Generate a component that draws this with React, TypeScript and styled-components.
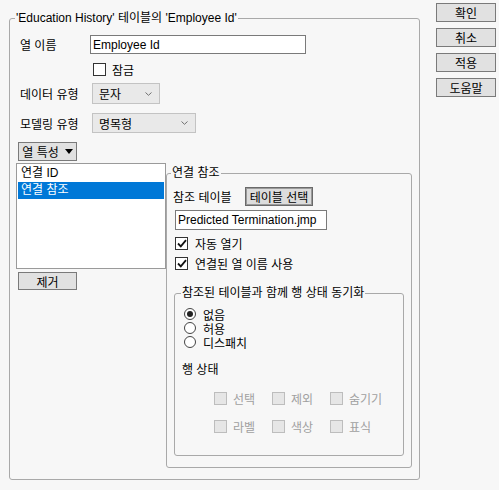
import React from 'react';
import styled, { createGlobalStyle } from 'styled-components';

const GlobalStyle = createGlobalStyle`
  html, body {
    margin: 0;
    padding: 0;
    background: #f7f7f7;
  }
  body {
    font-family: "Liberation Sans", "Noto Sans CJK KR", sans-serif;
    font-size: 12px;
    color: #000;
  }
`;

const Page = styled.div`
  display: flex;
  align-items: flex-start;
  gap: 16px;
  padding: 3px 0 0 9px;
  min-height: 487px;
`;

const Group = styled.fieldset<{ $w: number; $mt?: number; $ml?: number }>`
  box-sizing: border-box;
  width: ${(p) => p.$w}px;
  margin: ${(p) => p.$mt || 0}px 0 0 ${(p) => p.$ml || 0}px;
  padding: 0;
  border: 1px solid #a9a9a9;
  border-radius: 3px;
  min-width: 0;
`;

const Legend = styled.legend<{ $ml: number }>`
  margin-left: ${(p) => p.$ml}px;
  padding: 0 1px;
  line-height: 16px;
  white-space: nowrap;
`;

const GroupBody = styled.div<{ $pad: string }>`
  display: flex;
  flex-direction: column;
  align-items: flex-start;
  padding: ${(p) => p.$pad};
`;

const Row = styled.div<{ $mt?: number; $pl?: number; $h?: number }>`
  display: flex;
  align-items: center;
  margin-top: ${(p) => p.$mt || 0}px;
  padding-left: ${(p) => p.$pl || 0}px;
  height: ${(p) => (p.$h ? `${p.$h}px` : 'auto')};
`;

const Label = styled.span<{ $w: number }>`
  width: ${(p) => p.$w}px;
  flex-shrink: 0;
  white-space: nowrap;
`;

const TextInput = styled.div<{ $w: number; $h: number; $ml?: number }>`
  box-sizing: border-box;
  width: ${(p) => p.$w}px;
  height: ${(p) => p.$h}px;
  margin-left: ${(p) => p.$ml || 0}px;
  padding-left: 2px;
  background: #fff;
  border: 1px solid #7a7a7a;
  display: flex;
  align-items: center;
  white-space: nowrap;
`;

const Select = styled.div<{ $w: number; $h: number }>`
  box-sizing: border-box;
  width: ${(p) => p.$w}px;
  height: ${(p) => p.$h}px;
  margin-left: 2px;
  padding: 0 7px 0 6px;
  background: #e9e9e9;
  border: 1px solid #c3c3c3;
  display: flex;
  align-items: center;
  justify-content: space-between;
`;

const Button = styled.div<{ $w: number; $h: number; $ml?: number; $mt?: number }>`
  box-sizing: border-box;
  width: ${(p) => p.$w}px;
  height: ${(p) => p.$h}px;
  margin: ${(p) => p.$mt || 0}px 0 0 ${(p) => p.$ml || 0}px;
  background: #e1e1e1;
  border: 1px solid #7a7a7a;
  display: flex;
  align-items: center;
  justify-content: center;
  gap: 6px;
  white-space: nowrap;
`;

const PressedButton = styled(Button)`
  background: #dcdcdc;
  border-color: #6a6a6a;
  box-shadow: inset 0 0 0 1px #9a9a9a;
`;

const SideButtons = styled.div`
  display: flex;
  flex-direction: column;
  gap: 6px;
`;

const Lower = styled.div`
  display: flex;
  align-items: flex-start;
  margin-top: 2px;
`;

const LeftCol = styled.div`
  display: flex;
  flex-direction: column;
  align-items: flex-start;
  width: 150px;
`;

const ListBox = styled.div`
  box-sizing: border-box;
  width: 150px;
  height: 106px;
  padding: 1px;
  background: #fff;
  border: 1px solid #9a9a9a;
`;

const ListItem = styled.div<{ $sel?: boolean }>`
  height: 17px;
  line-height: 17px;
  padding-left: 3px;
  background: ${(p) => (p.$sel ? '#0078d7' : 'transparent')};
  color: ${(p) => (p.$sel ? '#fff' : '#000')};
`;

const Check = styled.span<{ $size: number; $disabled?: boolean; $ml?: number }>`
  box-sizing: border-box;
  width: ${(p) => p.$size}px;
  height: ${(p) => p.$size}px;
  margin-left: ${(p) => p.$ml || 0}px;
  flex-shrink: 0;
  background: ${(p) => (p.$disabled ? '#e6e6e6' : '#fff')};
  border: 1px solid ${(p) => (p.$disabled ? '#bdbdbd' : '#333')};
  display: flex;
  align-items: center;
  justify-content: center;
`;

const CheckText = styled.span<{ $gap: number; $disabled?: boolean }>`
  margin-left: ${(p) => p.$gap}px;
  color: ${(p) => (p.$disabled ? '#a0a0a0' : '#000')};
  white-space: nowrap;
`;

const Radio = styled.span<{ $on?: boolean }>`
  box-sizing: border-box;
  width: 12px;
  height: 12px;
  border-radius: 50%;
  border: 1px solid #444;
  background: #fff;
  display: flex;
  align-items: center;
  justify-content: center;
  &::after {
    content: '';
    display: ${(p) => (p.$on ? 'block' : 'none')};
    width: 6px;
    height: 6px;
    border-radius: 50%;
    background: #222;
  }
`;

const SubLabel = styled.div`
  margin: 13px 0 0 -2px;
  line-height: 16px;
`;

const StateGrid = styled.div`
  display: grid;
  grid-template-columns: repeat(3, 58px);
  row-gap: 15px;
  margin: 14px 0 0 30px;
`;

const GridCell = styled.div`
  display: flex;
  align-items: center;
  height: 13px;
`;

const Chevron = () => (
  <svg width="7" height="4" viewBox="0 0 7 4">
    <path d="M0.5 0.5 L3.5 3.3 L6.5 0.5" fill="none" stroke="#707070" strokeWidth="1" />
  </svg>
);

const Caret = () => (
  <svg width="8" height="5" viewBox="0 0 8 5">
    <path d="M0 0 L8 0 L4 5 Z" fill="#000" />
  </svg>
);

const Tick = () => (
  <svg width="10" height="9" viewBox="0 0 10 9">
    <path d="M1 4.5 L3.8 7.3 L9 1.2" fill="none" stroke="#111" strokeWidth="1.8" />
  </svg>
);

const rowStates = ['선택', '제외', '숨기기', '라벨', '색상', '표식'];

export default function App() {
  return (
    <>
      <GlobalStyle />
      <Page>
        <Group $w={411} $mt={7}>
          <Legend $ml={5}>'Education History' 테이블의 'Employee Id'</Legend>
          <GroupBody $pad="9px 7px 11px 6px">
            <Row $pl={4} $h={19}>
              <Label $w={70}>열 이름</Label>
              <TextInput $w={216} $h={19} $ml={0}>Employee Id</TextInput>
            </Row>
            <Row $mt={9} $pl={77} $h={13}>
              <Check $size={13} />
              <CheckText $gap={6}>잠금</CheckText>
            </Row>
            <Row $mt={7} $pl={4} $h={21}>
              <Label $w={70}>데이터 유형</Label>
              <Select $w={68} $h={21}>
                문자
                <Chevron />
              </Select>
            </Row>
            <Row $mt={9} $pl={4} $h={20}>
              <Label $w={70}>모델링 유형</Label>
              <Select $w={104} $h={20}>
                명목형
                <Chevron />
              </Select>
            </Row>
            <Button $w={59} $h={19} $ml={2} $mt={9}>
              열 특성
              <Caret />
            </Button>
            <Lower>
              <LeftCol>
                <ListBox>
                  <ListItem>연결 ID</ListItem>
                  <ListItem $sel>연결 참조</ListItem>
                </ListBox>
                <Button $w={59} $h={18} $ml={2} $mt={3}>제거</Button>
              </LeftCol>
              <Group $w={246} $mt={2}>
                <Legend $ml={4}>연결 참조</Legend>
                <GroupBody $pad="6px 6px 11px 6px">
                  <Row $h={19}>
                    <Label $w={72}>참조 테이블</Label>
                    <PressedButton $w={68} $h={19}>테이블 선택</PressedButton>
                  </Row>
                  <Row $mt={4}>
                    <TextInput $w={152} $h={20} $ml={2}>Predicted Termination.jmp</TextInput>
                  </Row>
                  <Row $mt={7} $h={13}>
                    <Check $size={13} $ml={2}>
                      <Tick />
                    </Check>
                    <CheckText $gap={7}>자동 열기</CheckText>
                  </Row>
                  <Row $mt={7} $h={13}>
                    <Check $size={13} $ml={2}>
                      <Tick />
                    </Check>
                    <CheckText $gap={7}>연결된 열 이름 사용</CheckText>
                  </Row>
                  <Group $w={230} $mt={15} $ml={1}>
                    <Legend $ml={6}>참조된 테이블과 함께 행 상태 동기화</Legend>
                    <GroupBody $pad="6px 0 22px 9px">
                      <Row $h={14}>
                        <Radio $on />
                        <CheckText $gap={7}>없음</CheckText>
                      </Row>
                      <Row $h={14}>
                        <Radio />
                        <CheckText $gap={7}>허용</CheckText>
                      </Row>
                      <Row $h={14}>
                        <Radio />
                        <CheckText $gap={7}>디스패치</CheckText>
                      </Row>
                      <SubLabel>행 상태</SubLabel>
                      <StateGrid>
                        {rowStates.map((s) => (
                          <GridCell key={s}>
                            <Check $size={13} $disabled />
                            <CheckText $gap={6} $disabled>{s}</CheckText>
                          </GridCell>
                        ))}
                      </StateGrid>
                    </GroupBody>
                  </Group>
                </GroupBody>
              </Group>
            </Lower>
          </GroupBody>
        </Group>
        <SideButtons>
          <Button $w={60} $h={19}>확인</Button>
          <Button $w={60} $h={19}>취소</Button>
          <Button $w={60} $h={19}>적용</Button>
          <Button $w={60} $h={19}>도움말</Button>
        </SideButtons>
      </Page>
    </>
  );
}
